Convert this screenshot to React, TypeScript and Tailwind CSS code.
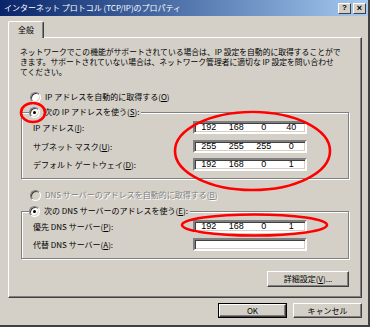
import React from "react";

const FONT = { fontFamily: '"Noto Sans CJK JP", "Noto Sans", sans-serif' };
const NUMFONT = { fontFamily: '"Liberation Sans", Arial, sans-serif' };

function Radio({ checked, disabled }: { checked?: boolean; disabled?: boolean }) {
  return (
    <div
      className={`w-[11px] h-[11px] rounded-full border border-t-[#808080] border-l-[#808080] border-b-white border-r-white shadow-[inset_1px_1px_0_#404040,inset_-1px_-1px_0_#d4d0c8] flex items-center justify-center shrink-0 ${
        disabled ? "bg-[#d4d0c8]" : "bg-white"
      }`}
    >
      {checked && <div className="w-[3px] h-[3px] rounded-full bg-black" />}
    </div>
  );
}

function IpBox({ values }: { values?: string[] }) {
  return (
    <div className="w-[114px] h-[13px] bg-white border-2 border-t-[#808080] border-l-[#808080] border-b-white border-r-white shadow-[inset_1px_1px_0_#404040,inset_-1px_-1px_0_#d4d0c8] grid grid-cols-4 items-center text-[9px] leading-none text-black" style={NUMFONT}>
      {values
        ? values.map((v, i) => (
            <span key={i} className="text-center">
              {v}
            </span>
          ))
        : null}
    </div>
  );
}

function Btn({ children, w, def }: { children: React.ReactNode; w: string; def?: boolean }) {
  return (
    <div className={`${w} ${def ? "border border-black" : ""}`}>
      <div className="h-full border border-t-white border-l-white border-b-[#404040] border-r-[#404040] shadow-[inset_-1px_-1px_0_#808080] flex items-center justify-center text-[8px] leading-none text-black">
        {children}
      </div>
    </div>
  );
}

export default function App() {
  return (
    <div
      className="w-[370px] h-[327px] bg-[#d4d0c8] flex flex-col border-r-2 border-b-2 border-r-[#404040] border-b-[#404040] text-black relative overflow-hidden"
      style={FONT}
    >
      {/* Title bar */}
      <div className="h-[16px] bg-gradient-to-r from-[#0a246a] to-[#a6caf0] flex items-center pl-[4px] pr-[2px]">
        <span className="text-white text-[8px] leading-none whitespace-nowrap">
          インターネット プロトコル (TCP/IP)のプロパティ
        </span>
        <div className="ml-auto flex gap-[2px]">
          <div className="w-[13px] h-[11px] bg-[#d4d0c8] border border-t-white border-l-white border-b-[#404040] border-r-[#404040] flex items-center justify-center text-[8px] font-bold leading-none" style={NUMFONT}>
            ?
          </div>
          <div className="w-[13px] h-[11px] bg-[#d4d0c8] border border-t-white border-l-white border-b-[#404040] border-r-[#404040] flex items-center justify-center text-[9px] font-bold leading-none" style={NUMFONT}>
            ×
          </div>
        </div>
      </div>

      {/* Body */}
      <div className="pl-[8px] flex flex-col w-[362px]">
        {/* Tab */}
        <div className="mt-[5px] flex">
          <div className="w-[36px] h-[17px] -mb-px relative z-10 bg-[#d4d0c8] border-t border-l border-r border-t-white border-l-white border-r-[#404040] shadow-[inset_-1px_0_0_#808080] rounded-t-[2px] flex items-center justify-center text-[8px] leading-none">
            全般
          </div>
        </div>

        {/* Panel */}
        <div className="h-[261px] w-[354px] border border-t-white border-l-white border-b-[#404040] border-r-[#404040] shadow-[inset_-1px_-1px_0_#808080] flex flex-col">
          <p className="mt-[9px] pl-[11px] text-[7.8px] leading-[10px] whitespace-nowrap">
            ネットワークでこの機能がサポートされている場合は、IP 設定を自動的に取得することがで
            <br />
            きます。サポートされていない場合は、ネットワーク管理者に適切な IP 設定を問い合わせ
            <br />
            てください。
          </p>

          <div className="mt-[14px] ml-[21px] h-[12px] flex items-center gap-[4px] text-[8px] leading-none">
            <Radio />
            <span>
              IP アドレスを自動的に取得する(<u>O</u>)
            </span>
          </div>

          {/* Group 1 */}
          <div className="mt-[9px] ml-[12px] w-[328px] h-[67px] border border-[#808080] shadow-[inset_1px_1px_0_#fff,1px_1px_0_#fff] flex flex-col">
            <div className="-mt-[7px] ml-[7px] h-[12px] w-fit pr-[2px] bg-[#d4d0c8] flex items-center gap-[4px] text-[8px] leading-none">
              <Radio checked />
              <span>
                次の IP アドレスを使う(<u>S</u>):
              </span>
            </div>
            <div className="mt-[3px] pl-[11px] h-[13px] flex items-center text-[8px] leading-none">
              <span className="w-[160px]">
                IP アドレス(<u>I</u>):
              </span>
              <IpBox values={["192", "168", "0", "40"]} />
            </div>
            <div className="mt-[6px] pl-[11px] h-[13px] flex items-center text-[8px] leading-none">
              <span className="w-[160px]">
                サブネット マスク(<u>U</u>):
              </span>
              <IpBox values={["255", "255", "255", "0"]} />
            </div>
            <div className="mt-[5px] pl-[11px] h-[13px] flex items-center text-[8px] leading-none">
              <span className="w-[160px]">
                デフォルト ゲートウェイ(<u>D</u>):
              </span>
              <IpBox values={["192", "168", "0", "1"]} />
            </div>
          </div>

          <div className="mt-[10px] ml-[21px] h-[12px] flex items-center gap-[4px] text-[8px] leading-none text-[#808080] [text-shadow:1px_1px_0_#fff]">
            <Radio disabled />
            <span>
              DNS サーバーのアドレスを自動的に取得する(<u>B</u>)
            </span>
          </div>

          {/* Group 2 */}
          <div className="mt-[10px] ml-[12px] w-[328px] h-[48px] border border-[#808080] shadow-[inset_1px_1px_0_#fff,1px_1px_0_#fff] flex flex-col">
            <div className="-mt-[7px] ml-[7px] h-[12px] w-fit pr-[2px] bg-[#d4d0c8] flex items-center gap-[4px] text-[8px] leading-none">
              <Radio checked />
              <span>
                次の DNS サーバーのアドレスを使う(<u>E</u>):
              </span>
            </div>
            <div className="mt-[3px] pl-[11px] h-[13px] flex items-center text-[8px] leading-none">
              <span className="w-[160px]">
                優先 DNS サーバー(<u>P</u>):
              </span>
              <IpBox values={["192", "168", "0", "1"]} />
            </div>
            <div className="mt-[5px] pl-[11px] h-[13px] flex items-center text-[8px] leading-none">
              <span className="w-[160px]">
                代替 DNS サーバー(<u>A</u>):
              </span>
              <IpBox />
            </div>
          </div>

          <div className="mt-[12px] ml-[258px] h-[16px] flex">
            <Btn w="w-[82px]">
              <span>
                詳細設定(<u>V</u>)...
              </span>
            </Btn>
          </div>
        </div>

        {/* Bottom buttons */}
        <div className="mt-[5px] h-[15px] flex justify-end gap-[6px]">
          <Btn w="w-[69px]" def>
            OK
          </Btn>
          <Btn w="w-[69px]">キャンセル</Btn>
        </div>
      </div>

      {/* Red annotation ellipses */}
      <svg className="absolute left-0 top-0 pointer-events-none" width="370" height="327" viewBox="0 0 370 327">
        <ellipse cx="33" cy="112.5" rx="12" ry="9.5" fill="none" stroke="#ff0000" strokeWidth="2.6" />
        <ellipse cx="252.5" cy="151" rx="77.5" ry="39" fill="none" stroke="#ff0000" strokeWidth="2.6" />
        <ellipse cx="254.5" cy="225" rx="72.5" ry="10.5" fill="none" stroke="#ff0000" strokeWidth="2.6" />
      </svg>
    </div>
  );
}
